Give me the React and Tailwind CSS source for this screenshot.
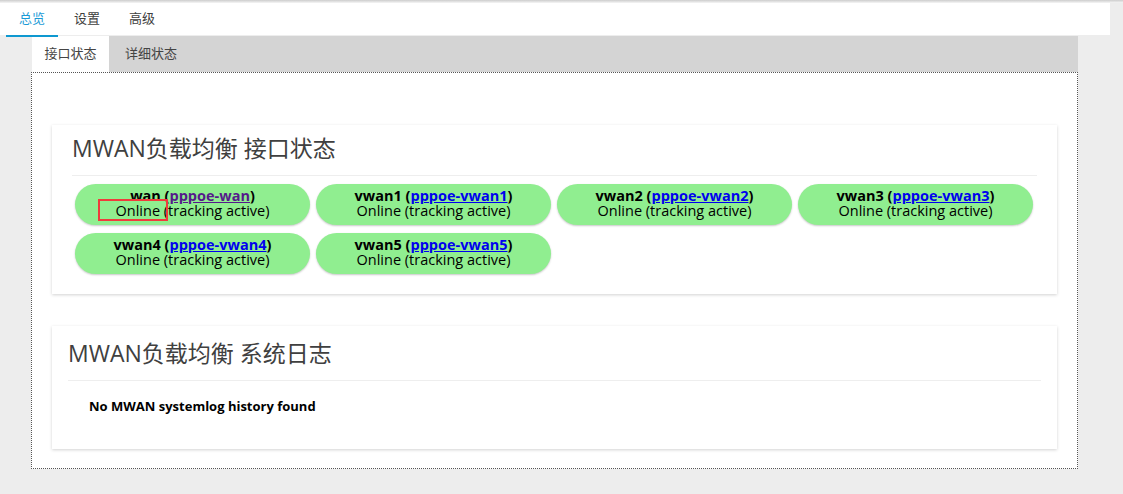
import React from "react";

const FONT = "font-['Open_Sans','Noto_Sans_CJK_SC',sans-serif]";

const mainTabs = ["总览", "设置", "高级"];

const interfaces = [
  { name: "wan", iface: "pppoe-wan", visited: true, mark: true },
  { name: "vwan1", iface: "pppoe-vwan1" },
  { name: "vwan2", iface: "pppoe-vwan2" },
  { name: "vwan3", iface: "pppoe-vwan3" },
  { name: "vwan4", iface: "pppoe-vwan4" },
  { name: "vwan5", iface: "pppoe-vwan5" },
];

function StatusPill({ name, iface, visited, mark }) {
  return (
    <div className="relative w-[235px] h-[41px] rounded-full bg-[#90ee90] shadow-[0_1px_2px_rgba(0,0,0,0.22)] pt-[4px] text-center text-[14.5px] leading-[15px] text-black">
      <div className="font-bold">
        {name} (
        <a
          href="#"
          className={visited ? "underline text-[#551a8b]" : "underline text-[#0000ee]"}
        >
          {iface}
        </a>
        )
      </div>
      <div>Online (tracking active)</div>
      {mark && (
        <span className="absolute left-[23px] top-[15px] w-[70px] h-[22px] border-2 border-[#f03c3c]" />
      )}
    </div>
  );
}

export default function App() {
  return (
    <div className={`min-h-screen bg-[#ededed] ${FONT}`}>
      <div className="h-[3px] bg-gradient-to-b from-[#cdcdcd] to-[#f6f6f6]" />

      <nav className="relative z-10 w-[1110px] h-[32px] bg-white flex pl-[6px] gap-[3px]">
        {mainTabs.map((tab, i) =>
          i === 0 ? (
            <div
              key={tab}
              className="h-[34px] px-[13px] flex items-center text-[13px] text-[#1a9ad6] border-b-2 border-[#0e98d0]"
            >
              {tab}
            </div>
          ) : (
            <div
              key={tab}
              className="h-[34px] px-[13px] pb-[2px] flex items-center text-[13px] text-[#404040]"
            >
              {tab}
            </div>
          )
        )}
      </nav>

      <div className="ml-[31px] w-[1047px] mt-px">
        <div className="ml-px flex h-[36px] bg-[#d4d4d4] text-[13px] text-[#444]">
          <div className="w-[77px] bg-white flex items-center justify-center">接口状态</div>
          <div className="px-[16px] flex items-center">详细状态</div>
        </div>

        <div className="border border-dotted border-[#555] bg-white px-[20px] pt-[52px] pb-[19px]">
          <section className="bg-white shadow-[0_1px_3px_rgba(0,0,0,0.18)] px-[20px] pt-[8px] pb-[20px]">
            <h2 className="h-[31px] leading-[31px] text-[23px] text-[#404040]">
              MWAN负载均衡 接口状态
            </h2>
            <div className="mt-[11px] border-t border-[#eeeeee]" />
            <div className="mt-[8px] pl-[3px] flex flex-wrap gap-x-[6px] gap-y-[8px]">
              {interfaces.map((item) => (
                <StatusPill key={item.name} {...item} />
              ))}
            </div>
          </section>

          <section className="mt-[32px] bg-white shadow-[0_1px_3px_rgba(0,0,0,0.18)] px-[16px] pt-[12px] pb-[34px]">
            <h2 className="h-[31px] leading-[31px] text-[23px] text-[#404040]">
              MWAN负载均衡 系统日志
            </h2>
            <div className="mt-[11px] border-t border-[#eeeeee]" />
            <p className="mt-[16px] pl-[21px] text-[13px] leading-[18px] font-bold text-black">
              No MWAN systemlog history found
            </p>
          </section>
        </div>
      </div>
    </div>
  );
}
